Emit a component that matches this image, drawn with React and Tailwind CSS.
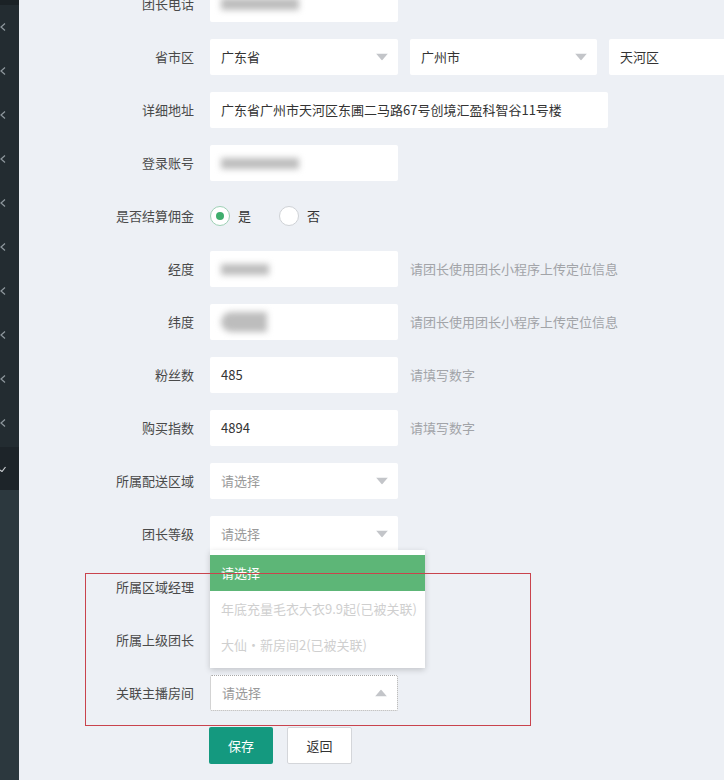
import React from "react";

const FONT = { fontFamily: '"Microsoft YaHei", "Noto Sans CJK SC", "Noto Sans", sans-serif' };

function Arrow({ up }) {
  return (
    <svg width="12" height="7" viewBox="0 0 12 7" className="absolute right-[10px] top-1/2 -translate-y-1/2">
      {up ? <path d="M0 7 L6 0 L12 7 Z" fill="#c3c5c9" /> : <path d="M0 0 L12 0 L6 7 Z" fill="#c3c5c9" />}
    </svg>
  );
}

function Row({ label, children, hint }) {
  return (
    <div className="flex items-center h-[36px]">
      <div className="w-[175px] text-right text-[13px] text-[#4a4a4a] shrink-0">{label}</div>
      <div className="ml-[16px] flex items-center">
        {children}
        {hint && <span className="ml-[12px] text-[13px] text-[#a2a4a8]">{hint}</span>}
      </div>
    </div>
  );
}

function Box({ w = "w-[188px]", children, className = "" }) {
  return (
    <div className={`relative ${w} h-[36px] bg-white rounded-[2px] flex items-center px-[11px] text-[13px] text-[#333] ${className}`}>
      {children}
    </div>
  );
}

function Blur({ w, h = 12, shape = "" }) {
  return <div className={`bg-[#bdbdbd] blur-[3px] ${shape}`} style={{ width: w, height: h }} />;
}

function Chevron() {
  return (
    <svg width="6" height="8" viewBox="0 0 6 8">
      <path d="M5 0.5 L1 4 L5 7.5" stroke="#8f989e" strokeWidth="1.2" fill="none" />
    </svg>
  );
}

export default function App() {
  const items = [27, 70, 116, 160, 204, 247, 291, 335, 378, 422];
  return (
    <div className="flex w-[724px] h-[780px] overflow-hidden bg-[#edf0f5] relative" style={FONT}>
      {/* sidebar */}
      <div className="w-[19px] shrink-0 flex flex-col">
        <div className="h-[5px] bg-[#1b2226]" />
        <div className="h-[442px] bg-[#232c31] flex flex-col">
          {items.map((y, i) => (
            <div key={i} className="h-[44px] flex items-center pl-0">
              <Chevron />
            </div>
          ))}
        </div>
        <div className="h-[43px] bg-[#1d2429] flex items-center">
          <svg width="6" height="6" viewBox="0 0 6 6">
            <path d="M0 4 L2 5.5 L5.5 1" stroke="#c9cdd0" strokeWidth="1.2" fill="none" />
          </svg>
        </div>
        <div className="flex-1 bg-[#2c383e]" />
      </div>

      {/* main */}
      <div className="flex-1 relative">
        <div className="flex flex-col gap-[17px] -mt-[14px]">
          <Row label="团长电话">
            <Box><Blur w={78} h={12} /></Box>
          </Row>
          <Row label="省市区">
            <div className="flex gap-[12px]">
              <Box>广东省<Arrow /></Box>
              <Box w="w-[187px]">广州市<Arrow /></Box>
              <Box w="w-[130px]">天河区</Box>
            </div>
          </Row>
          <Row label="详细地址">
            <Box w="w-[398px]">广东省广州市天河区东圃二马路67号创境汇盈科智谷11号楼</Box>
          </Row>
          <Row label="登录账号">
            <Box><Blur w={78} h={11} /></Box>
          </Row>
          <Row label="是否结算佣金">
            <div className="flex items-center text-[13px] text-[#333]">
              <span className="w-[20px] h-[20px] rounded-full border border-[#9ed1b5] flex items-center justify-center bg-white">
                <span className="w-[8px] h-[8px] rounded-full bg-[#3fae6d]" />
              </span>
              <span className="ml-[8px]">是</span>
              <span className="ml-[28px] w-[20px] h-[20px] rounded-full border border-[#cfd2d6] bg-white" />
              <span className="ml-[8px]">否</span>
            </div>
          </Row>
          <Row label="经度" hint="请团长使用团长小程序上传定位信息">
            <Box><Blur w={48} h={11} /></Box>
          </Row>
          <Row label="纬度" hint="请团长使用团长小程序上传定位信息">
            <Box><Blur w={46} h={20} shape="rounded-l-full" /></Box>
          </Row>
          <Row label="粉丝数" hint="请填写数字">
            <Box>485</Box>
          </Row>
          <Row label="购买指数" hint="请填写数字">
            <Box>4894</Box>
          </Row>
          <Row label="所属配送区域">
            <Box><span className="text-[#9a9a9a]">请选择</span><Arrow /></Box>
          </Row>
          <Row label="团长等级">
            <div className="relative">
              <Box><span className="text-[#9a9a9a]">请选择</span><Arrow /></Box>
              <div className="absolute left-0 top-[34px] w-[215px] h-[118px] bg-white shadow-[0_2px_6px_rgba(0,0,0,0.18)] z-10 pt-[5px] text-[13px]">
                <div className="h-[36px] bg-[#5db677] text-white flex items-center px-[11px]">请选择</div>
                <div className="h-[36px] text-[#cfcfcf] flex items-center px-[11px] whitespace-nowrap">年底充量毛衣大衣9.9起(已被关联)</div>
                <div className="h-[36px] text-[#cfcfcf] flex items-center px-[11px] whitespace-nowrap">大仙·新房间2(已被关联)</div>
              </div>
            </div>
          </Row>
          <Row label="所属区域经理">
            <Box><Arrow /></Box>
          </Row>
          <Row label="所属上级团长">
            <Box><Arrow /></Box>
          </Row>
          <Row label="关联主播房间">
            <Box className="border border-dotted border-[#a8a8a8]"><span className="text-[#9a9a9a]">请选择</span><Arrow up /></Box>
          </Row>
          <div className="flex ml-[190px] -mt-[1px] gap-[14px]">
            <button className="w-[64px] h-[37px] bg-[#14997f] text-white text-[13px] rounded-[2px]">保存</button>
            <button className="w-[65px] h-[37px] bg-white border border-[#d4d6da] text-[#333] text-[13px] rounded-[2px]">返回</button>
          </div>
        </div>
      </div>

      {/* red annotation box */}
      <div className="absolute left-[85px] top-[573px] w-[446px] h-[153px] border border-[#c9434d] z-20 pointer-events-none" />
    </div>
  );
}
